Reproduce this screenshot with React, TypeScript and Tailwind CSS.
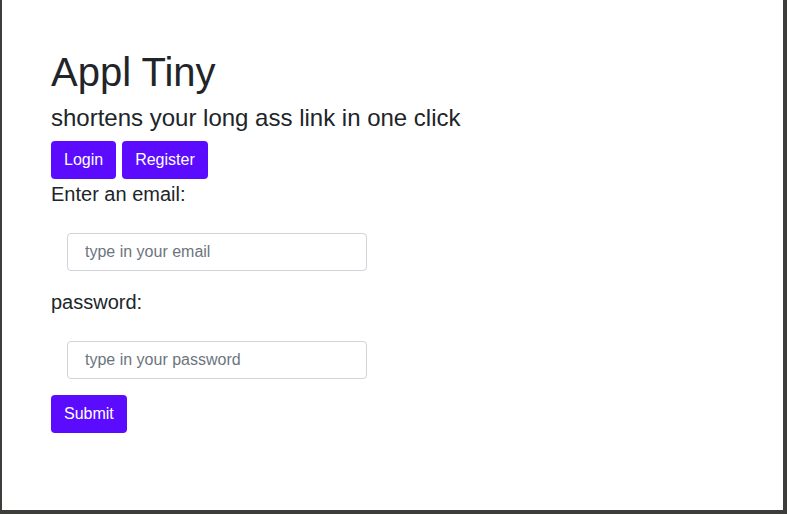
export default function App() {
  return (
    <div className="w-[788px] h-[514px] bg-white" style={{ fontFamily: '"Liberation Sans", Arial, sans-serif' }}>
      <div className="w-[787px] h-[514px] border-l-2 border-r-4 border-b-4 border-[#3d3d3a] bg-white pl-[49px] pt-[48px] text-[#212529]">
        <h1 className="text-[40px] leading-[48px] mb-2">Appl Tiny</h1>
        <h4 className="text-[24px] leading-[28.8px] mb-[8px]">shortens your long ass link in one click</h4>
        <div className="flex gap-[6px]">
          <button className="h-[38px] px-[13px] rounded-[4px] bg-[#5b0cff] text-white text-[16px]">Login</button>
          <button className="h-[38px] px-[13px] rounded-[4px] bg-[#5b0cff] text-white text-[16px]">Register</button>
        </div>
        <label className="block text-[20px] leading-[30px]">Enter an email:</label>
        <div className="pt-[24px] pb-[16px] pl-4">
          <input className="block w-[300px] h-[38px] border border-[#ced4da] rounded-[4px] px-[17px] text-[16px] placeholder:text-[#6c757d] outline-none" placeholder="type in your email" />
        </div>
        <label className="block text-[20px] leading-[30px]">password:</label>
        <div className="pt-[24px] pb-[16px] pl-4">
          <input className="block w-[300px] h-[38px] border border-[#ced4da] rounded-[4px] px-[17px] text-[16px] placeholder:text-[#6c757d] outline-none" placeholder="type in your password" />
        </div>
        <button className="h-[38px] px-[13px] rounded-[4px] bg-[#5b0cff] text-white text-[16px]">Submit</button>
      </div>
    </div>
  );
}
